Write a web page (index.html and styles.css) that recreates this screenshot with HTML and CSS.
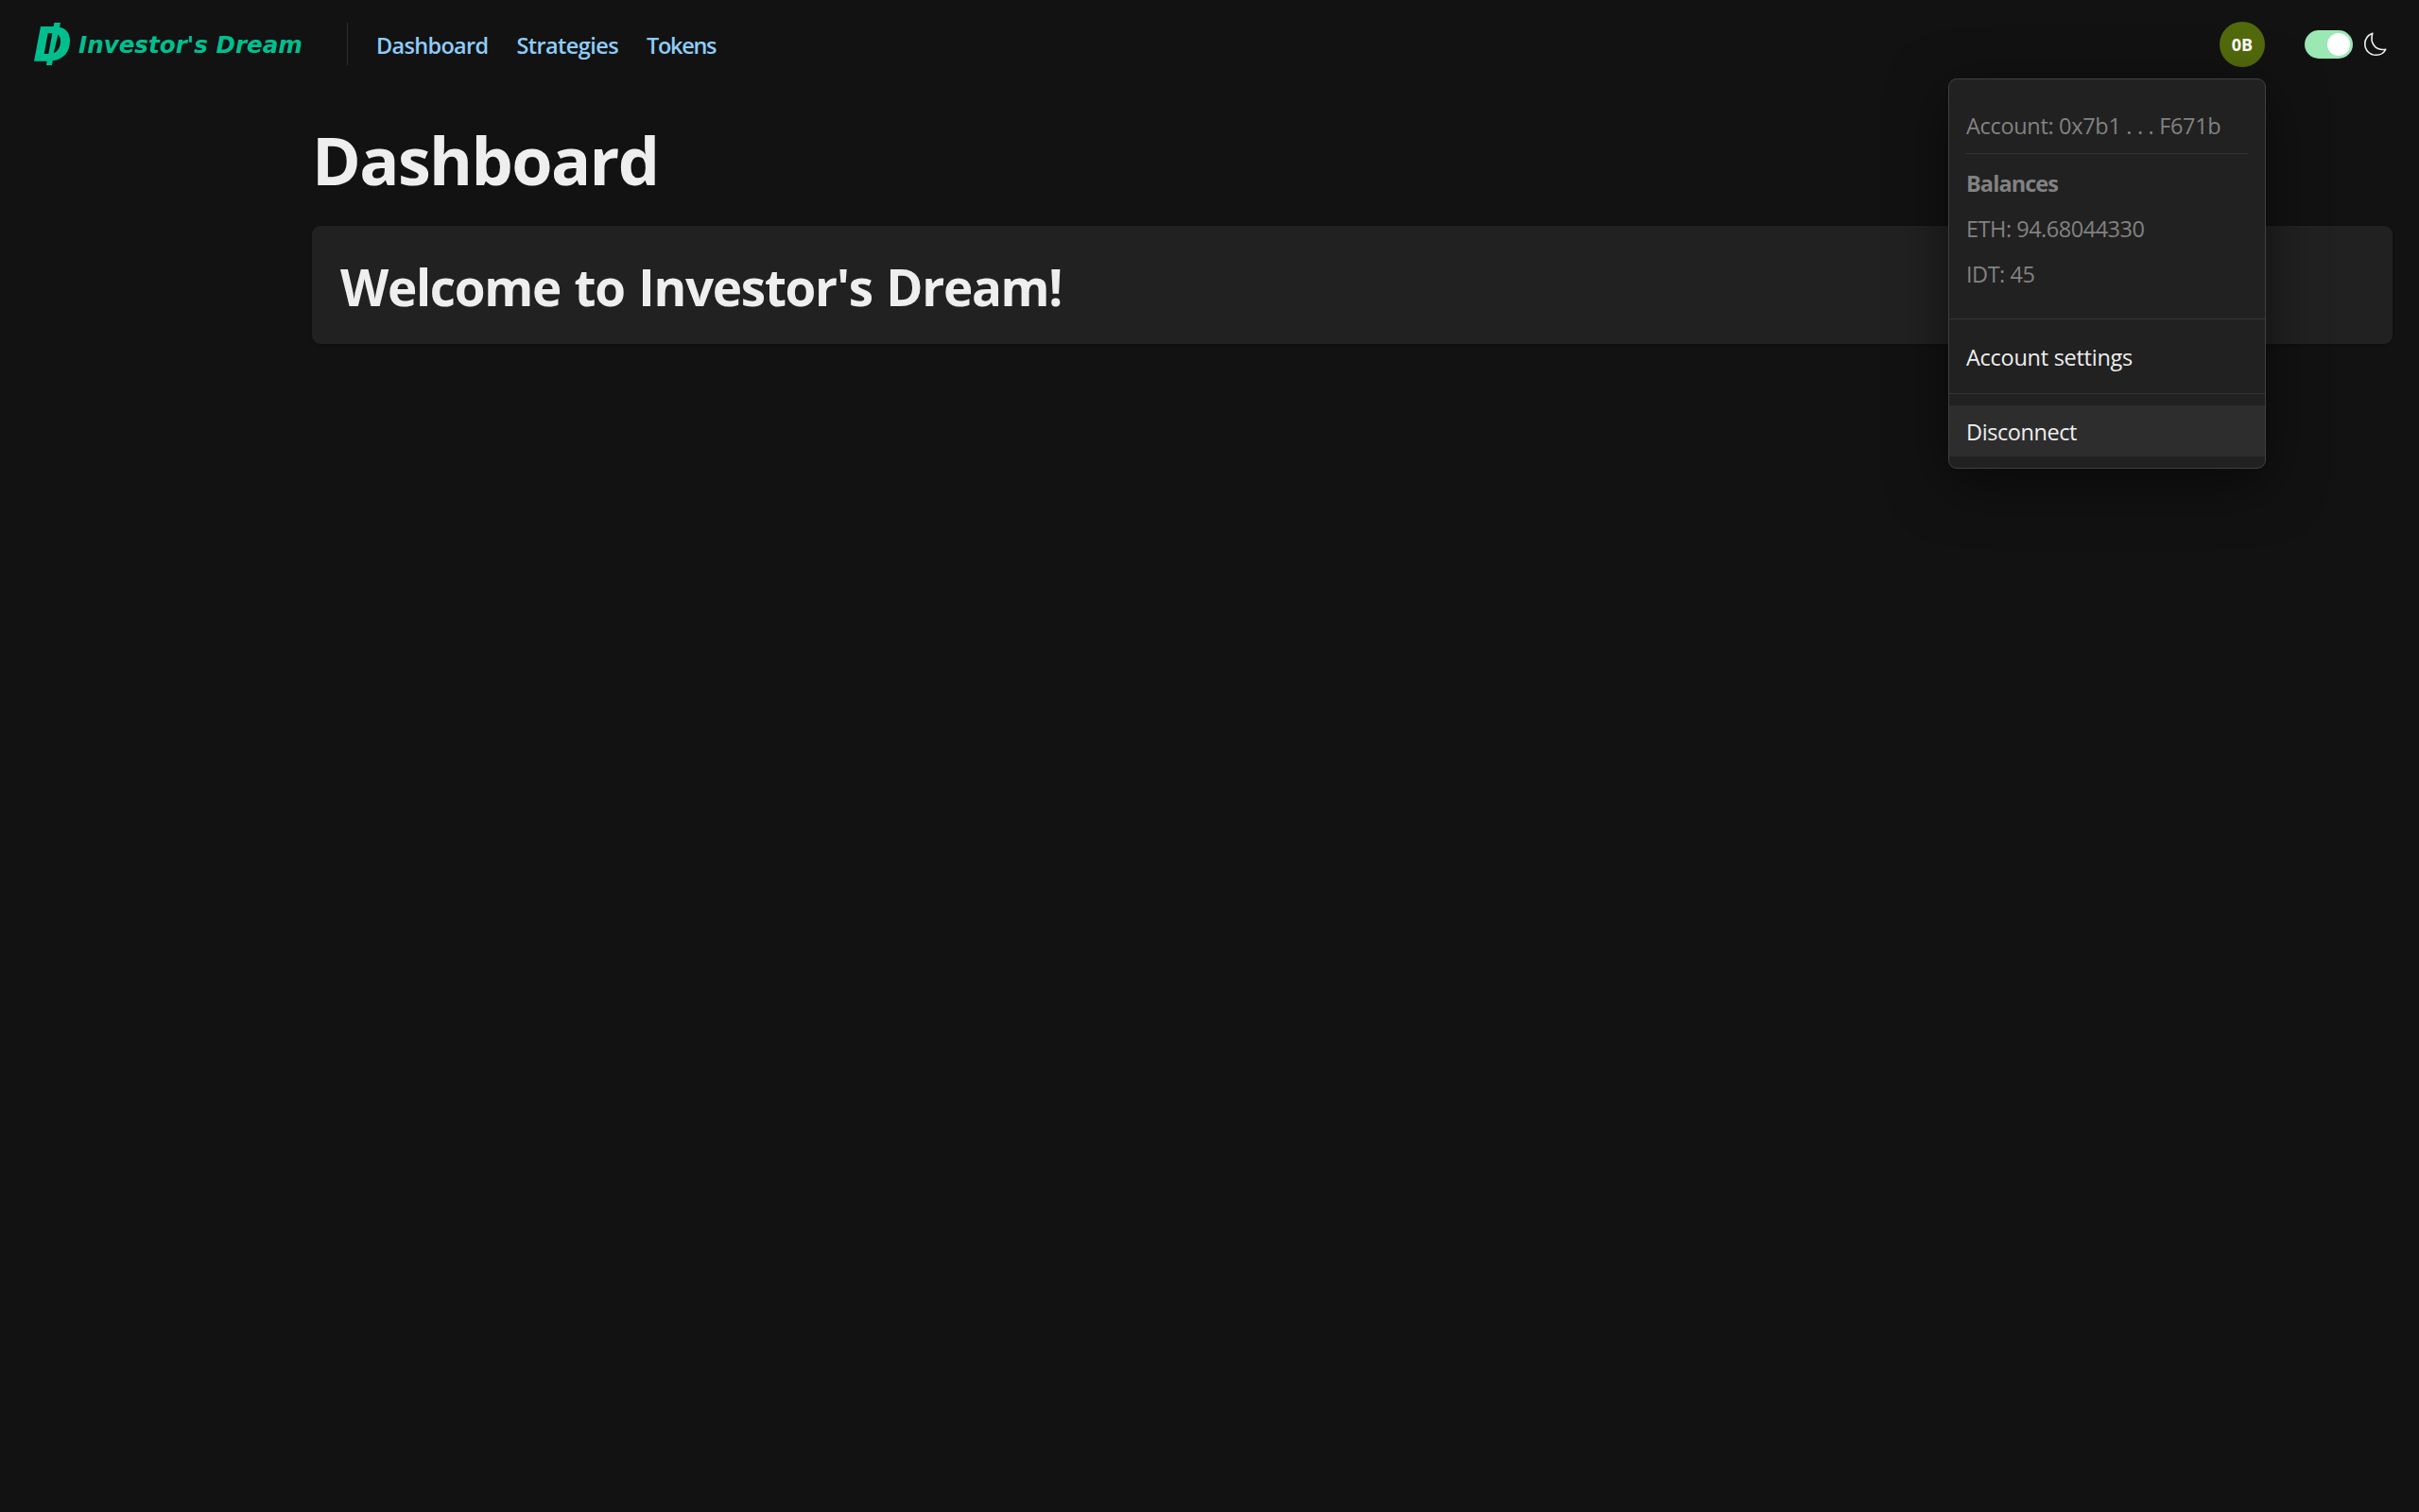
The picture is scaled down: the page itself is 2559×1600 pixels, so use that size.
FILE: index.html
```
<!DOCTYPE html>
<html lang="en">
<head>
<meta charset="utf-8">
<title>Investor's Dream</title>
<link rel="stylesheet" href="styles.css">
</head>
<body>
<header class="topbar">
  <a class="brand">
    <svg class="brand-mark" viewBox="48 42 114 135" aria-hidden="true">
      <path fill="#00bf8f" fill-rule="evenodd" d="M69 54H110L112 42H132L129 56C151 61 162 76 162 99C162 136 141 158 107 163L105 177H87L89 164H48ZM92 76L80 141H94L106 76ZM124 80L110 139C125 132 132 117 132 101C132 90 129 83 124 80Z"/>
    </svg>
    <span class="brand-name">Investor's Dream</span>
  </a>
  <nav class="nav">
    <a class="nav-link dashboard">Dashboard</a>
    <a class="nav-link strategies">Strategies</a>
    <a class="nav-link tokens">Tokens</a>
  </nav>
  <div class="tools">
    <div class="account">
      <button class="avatar">0B</button>
      <div class="menu">
        <section class="menu-info">
          <p class="address">Account: 0x7b1 . . . F671b</p>
          <p class="balances">Balances</p>
          <p class="amount">ETH: 94.68044330</p>
          <p class="amount">IDT: 45</p>
        </section>
        <div class="menu-group"><a class="menu-item">Account settings</a></div>
        <div class="menu-group"><a class="menu-item active">Disconnect</a></div>
      </div>
    </div>
    <div class="theme">
      <span class="switch"><span class="knob"></span></span>
      <svg class="moon" viewBox="0 0 24 26" aria-hidden="true">
        <path fill="none" stroke="#f0f0f0" stroke-width="1.6" stroke-linejoin="round" d="M8.8 1.2C3.5 3.4 .8 7.6 .8 12.5C.8 19.3 6 24.3 12.6 24.3C17.3 24.3 21 22.3 22.7 18.3C12.5 19.8 5.6 12.3 8.8 1.2Z"/>
      </svg>
    </div>
  </div>
</header>
<main class="page">
  <h1 class="title">Dashboard</h1>
  <section class="card"><h2 class="welcome">Welcome to Investor's Dream!</h2></section>
</main>
</body>
</html>
```
FILE: styles.css
```
* { box-sizing: border-box; margin: 0; padding: 0; }
body {
  background: #121212;
  color: #eee;
  font: 400 23.5px/36px "Open Sans", "Noto Sans", sans-serif;
  min-height: 100vh;
}
.topbar { display: flex; align-items: center; height: 93px; padding: 0 34px 0 36px; }
.brand {
  display: flex;
  align-items: center;
  gap: 9px;
  width: 332px;
  height: 45px;
  border-right: 1px solid #2d2d2d;
}
.brand-mark { width: 38px; height: 45px; }
.brand-name {
  padding-top: 2px;
  color: #00bf8f;
  font: italic 700 24.6px/36px "DejaVu Sans", sans-serif;
  white-space: nowrap;
}
.nav { display: flex; gap: 30px; padding: 3px 0 0 30px; }
.nav-link { color: #8ecdf8; font-weight: 600; letter-spacing: -.69px; }
.nav-link.strategies { letter-spacing: -.58px; }
.nav-link.tokens { letter-spacing: -1.3px; }
.tools { display: flex; align-items: center; gap: 42px; margin-left: auto; }
.account { position: relative; height: 48px; }
.avatar {
  width: 48px;
  height: 48px;
  border: 0;
  border-radius: 50%;
  background: #526a0c;
  color: #fff;
  font: 700 18px/48px "Open Sans", sans-serif;
}
.theme { display: flex; align-items: center; gap: 12px; }
.switch { display: flex; justify-content: flex-end; width: 51px; height: 30px; padding: 3px; border-radius: 15px; background: #9be8b5; }
.knob { width: 24px; height: 24px; border-radius: 50%; background: #fff; }
.moon { width: 24px; height: 26px; }
.menu {
  position: absolute;
  top: 60px;
  right: -1px;
  z-index: 2;
  width: 336px;
  border: 1px solid #404040;
  border-radius: 9px;
  background: #212121;
  box-shadow: 0 15px 60px rgba(0, 0, 0, .5);
}
.menu-info { padding: 31px 18px 29px; color: #828282; }
.address { padding-bottom: 11px; border-bottom: 1px solid #353535; letter-spacing: -.32px; }
.balances { margin-top: 13px; font-weight: 700; letter-spacing: -.92px; }
.amount { margin-top: 12px; letter-spacing: -.48px; }
.menu-group { padding: 12px 0; border-top: 1px solid #353535; }
.menu-item { display: block; padding: 10px 18px 8px; letter-spacing: -.27px; }
.menu-item.active { background: #2d2d2d; letter-spacing: -.42px; }
.page { padding: 27px 28px 0 330px; }
.title { font-size: 70px; line-height: 98px; letter-spacing: -1.6px; }
.card { height: 125px; margin-top: 21px; padding: 32px 30px 27px; border-radius: 9px; background: #212121; box-shadow: 0 1px 3px rgba(0, 0, 0, .25); }
.welcome { font-size: 53px; line-height: 66px; letter-spacing: -1.3px; word-spacing: 2px; }
```
